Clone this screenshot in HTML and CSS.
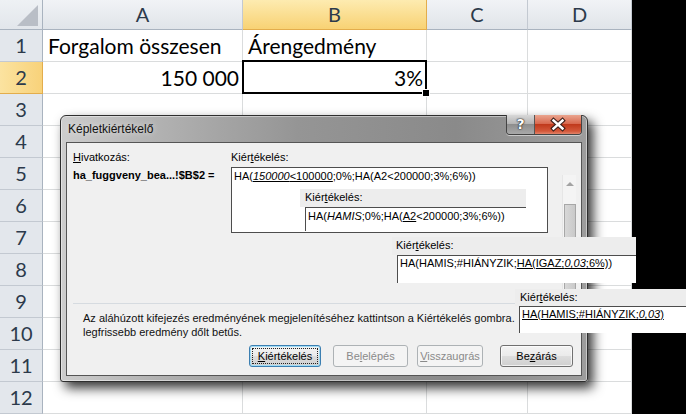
FILE: index.html
```html
<!DOCTYPE html>
<html lang="hu">
<head>
<meta charset="utf-8">
<title>Képletkiértékelő</title>
<link rel="stylesheet" href="styles.css">
</head>
<body>
<div class="sheet">
  <div class="corner"><svg width="42" height="29" viewBox="0 0 42 29"><polygon points="38,5 38,26 17,26" fill="#b9bec6"/></svg></div>
  <div class="ch">A</div><div class="ch hl">B</div><div class="ch">C</div><div class="ch">D</div>
  <div class="void"></div>

  <div class="rh">1</div><div class="c">Forgalom összesen</div><div class="c">Árengedmény</div><div class="c"></div><div class="c"></div>
  <div class="rh hl">2</div><div class="c num">150 000</div><div class="c num active">3%</div><div class="c"></div><div class="c"></div>
  <div class="rh">3</div><div class="c"></div><div class="c"></div><div class="c"></div><div class="c"></div>
  <div class="rh">4</div><div class="c"></div><div class="c"></div><div class="c"></div><div class="c"></div>
  <div class="rh">5</div><div class="c"></div><div class="c"></div><div class="c"></div><div class="c"></div>
  <div class="rh">6</div><div class="c"></div><div class="c"></div><div class="c"></div><div class="c"></div>
  <div class="rh">7</div><div class="c"></div><div class="c"></div><div class="c"></div><div class="c"></div>
  <div class="rh">8</div><div class="c"></div><div class="c"></div><div class="c"></div><div class="c"></div>
  <div class="rh">9</div><div class="c"></div><div class="c"></div><div class="c"></div><div class="c"></div>
  <div class="rh">10</div><div class="c"></div><div class="c"></div><div class="c"></div><div class="c"></div>
  <div class="rh">11</div><div class="c"></div><div class="c"></div><div class="c"></div><div class="c"></div>
  <div class="rh">12</div><div class="c"></div><div class="c"></div><div class="c"></div><div class="c"></div>
</div>

<div class="dialog">
  <div class="titlebar">
    <span class="title">Képletkiértékelő</span>
    <div class="capbtns">
      <div class="help">?</div>
      <div class="close"><svg width="46" height="19" viewBox="0 0 46 19"><path d="M18.5 5.5 L27.5 13.5 M27.5 5.5 L18.5 13.5" stroke="#3b1f1a" stroke-width="4.6" stroke-linecap="square" fill="none"/><path d="M18.5 5.5 L27.5 13.5 M27.5 5.5 L18.5 13.5" stroke="#ffffff" stroke-width="2.4" stroke-linecap="square" fill="none"/></svg></div>
    </div>
  </div>
  <div class="client">
    <div class="top">
      <div class="refcol">
        <div class="lbl"><u>H</u>ivatkozás:</div>
        <div class="ref">ha_fuggveny_bea...!$B$2 =</div>
      </div>
      <div class="evalcol">
        <div class="lbl">Kiér<u>t</u>ékelés:</div>
        <div class="evalbox">HA(<u><i>150000</i>&lt;100000</u>;0%;HA(A2&lt;200000;3%;6%))</div>
      </div>
      <div class="vscroll"><div class="uparrow"></div><div class="thumb"></div></div>
    </div>
    <div class="sep"></div>
    <p class="msg">Az aláhúzott kifejezés eredményének megjelenítéséhez kattintson a Kiértékelés gombra.&nbsp; A<br>legfrissebb eredmény dőlt betűs.</p>
    <div class="buttons">
      <div class="btn b1 focus"><span class="focusring"><u>K</u>iértékelés</span></div>
      <div class="btn b2 disabled">Be<u>l</u>elépés</div>
      <div class="btn b3 disabled"><u>V</u>isszaugrás</div>
      <div class="btn b4">Be<u>z</u>árás</div>
    </div>
  </div>
</div>

<div class="step s2">
  <div class="band">Kiér<u>t</u>ékelés:</div>
  <div class="sbox">HA(<i>HAMIS</i>;0%;HA(<u>A2</u>&lt;200000;3%;6%))</div>
</div>
<div class="step s3">
  <div class="band">Kiér<u>t</u>ékelés:</div>
  <div class="sbox">HA(HAMIS;#HIÁNYZIK;<u>HA(IGAZ;<i>0,03</i>;6%)</u>)</div>
</div>
<div class="step s4">
  <div class="band">Kiér<u>t</u>ékelés:</div>
  <div class="sbox"><u>HA(HAMIS;#HIÁNYZIK;<i>0,03</i>)</u></div>
</div>
</body>
</html>
```
FILE: styles.css
```css
* { box-sizing: border-box; }
html, body { margin: 0; padding: 0; }
body {
  width: 686px;
  height: 414px;
  overflow: hidden;
  position: relative;
  background: #ffffff;
}

/* ---------- spreadsheet ---------- */
.sheet {
  display: grid;
  grid-template-columns: 43px 200px 184px 101px 104px 54px;
  grid-template-rows: 30px repeat(12, 32px);
  font-family: Lato, "Liberation Sans", sans-serif;
}
.void {
  grid-column: 6;
  grid-row: 1 / span 13;
  background: #000;
}
.corner {
  background: linear-gradient(#eef1f4, #e2e6eb);
  border-right: 1px solid #a9b3bf;
  border-bottom: 1px solid #a9b3bf;
}
.corner svg { display: block; }
.ch {
  background: linear-gradient(#f1f3f6, #e0e4e9);
  border-right: 1px solid #c3c9d1;
  border-bottom: 1px solid #a9b3bf;
  text-align: center;
  font-size: 20px;
  line-height: 29px;
  color: #2c3a4b;
}
.rh {
  background: #e3e7ec;
  border-right: 1px solid #a9b3bf;
  border-bottom: 1px solid #c3c9d1;
  text-align: center;
  font-size: 20px;
  line-height: 31px;
  color: #2c3a4b;
}
.ch.hl {
  background: linear-gradient(#fdebb0, #f8d274);
  border-right-color: #e3ad4c;
  border-bottom-color: #e3ad4c;
}
.rh.hl {
  background: linear-gradient(to right, #fbe3a0, #f8d27a);
  border-right-color: #e3ad4c;
  border-bottom-color: #e3ad4c;
}
.c {
  border-right: 1px solid #dadcdd;
  border-bottom: 1px solid #dadcdd;
  font-size: 21px;
  line-height: 31px;
  padding: 0 3px 0 5px;
  white-space: nowrap;
  color: #000;
}
.num { text-align: right; }
.active { position: relative; }
.active::after {
  content: "";
  position: absolute;
  left: -1px; top: -2px; right: -1px; bottom: -1px;
  border: 2px solid #000;
}
.active::before {
  content: "";
  position: absolute;
  right: -4px; bottom: -4px;
  width: 6px; height: 6px;
  background: #000;
  border: 1px solid #fff;
  z-index: 2;
}

/* ---------- dialog ---------- */
.dialog {
  position: absolute;
  left: 60px;
  top: 115px;
  width: 528px;
  height: 267px;
  display: flex;
  flex-direction: column;
  border: 1px solid #2e2e2e;
  border-radius: 6px 6px 3px 3px;
  background: linear-gradient(to right, #cdcdcd 0%, #b2b2b2 18%, #959595 45%, #8a8a8a 75%, #9d9d9d 100%);
  box-shadow: 5px 6px 12px rgba(0,0,0,0.8), inset 0 0 0 1px rgba(255,255,255,0.45);
  font-family: "Liberation Sans", Arial, sans-serif;
  font-size: 11px;
  color: #000;
}
.titlebar {
  height: 26px;
  display: flex;
  justify-content: space-between;
  align-items: flex-start;
  padding-left: 7px;
  padding-right: 5px;
}
.title {
  font-size: 12px;
  line-height: 26px;
  color: #111;
  text-shadow: 0 0 6px rgba(255,255,255,0.7);
}
.capbtns {
  display: flex;
  margin-top: -1px;
  border: 1px solid #444;
  border-top: none;
  border-radius: 0 0 4px 4px;
  overflow: hidden;
  box-shadow: 0 1px 0 rgba(255,255,255,0.5);
}
.help {
  width: 28px;
  height: 19px;
  background: linear-gradient(#d8d8d8, #b5b5b5 45%, #8e8e8e 50%, #a9a9a9);
  border-right: 1px solid #555;
  text-align: center;
  font: bold 14px/19px "DejaVu Sans", sans-serif;
  color: #fff;
  text-shadow: 0 0 1px #222, 0 0 1px #222, 0 0 2px #333;
}
.close {
  width: 46px;
  height: 19px;
  background: linear-gradient(#eaa58f, #d86a50 45%, #c03a1c 50%, #d3583a 85%, #e2846a);
}
.close svg { display: block; }

.client {
  flex: 1;
  margin: 0 5px 5px 5px;
  background: #f0f0f0;
  border: 1px solid #555;
  padding: 8px 0 0 6px;
  display: flex;
  flex-direction: column;
}
.top {
  display: flex;
  height: 152px;
}
.refcol { width: 158px; }
.lbl { line-height: 13px; white-space: nowrap; }
.ref {
  margin-top: 5px;
  font-weight: bold;
  font-size: 11px;
  line-height: 13px;
  white-space: nowrap;
}
.evalcol { width: 317px; }
.evalcol .lbl { margin-bottom: 3px; }
.evalbox {
  height: 66px;
  background: #fff;
  border: 1px solid #4d4d4d;
  padding: 1px 2px;
  line-height: 14px;
  white-space: nowrap;
  overflow: hidden;
}
.vscroll {
  margin-left: 14px;
  margin-top: 24px;
  width: 14px;
  height: 128px;
  background: #f4f4f4;
  border-left: 1px solid #e6e6e6;
  display: flex;
  flex-direction: column;
  align-items: center;
}
.uparrow {
  margin-top: 7px;
  width: 0; height: 0;
  border-left: 4px solid transparent;
  border-right: 4px solid transparent;
  border-bottom: 4px solid #a3a3a3;
}
.thumb {
  margin-top: 18px;
  width: 12px;
  flex: 1;
  background: linear-gradient(to right, #d8d8d8, #c9c9c9);
  border: 1px solid #a7a7a7;
  border-bottom: none;
}
.sep {
  height: 1px;
  margin-right: 8px;
  background: #d6dbe0;
}
.msg {
  margin: 7px 0 0 10px;
  line-height: 14px;
  white-space: nowrap;
  color: #101010;
}
.buttons {
  display: flex;
  margin-top: 6px;
  padding-left: 176px;
}
.btn {
  height: 22px;
  border: 1px solid #707070;
  border-radius: 3px;
  background: linear-gradient(#f3f3f3 0%, #ebebeb 48%, #dddddd 52%, #cfcfcf 100%);
  box-shadow: inset 0 0 0 1px rgba(255,255,255,0.7);
  text-align: center;
  line-height: 20px;
  white-space: nowrap;
}
.b1 { width: 72px; }
.b2 { width: 75px; margin-left: 12px; }
.b3 { width: 66px; margin-left: 9px; }
.b4 { width: 73px; margin-left: 17px; }
.btn.focus {
  border-color: #3c7fb1;
  box-shadow: inset 0 0 0 1px #9fdcf6;
  padding: 2px;
}
.focusring {
  display: block;
  height: 16px;
  line-height: 15px;
  border: 1px dotted #222;
}
.btn.disabled {
  border-color: #adb2b5;
  background: #f4f4f4;
  color: #8a8a8a;
  box-shadow: none;
}

/* ---------- evaluation step overlays ---------- */
.step {
  position: absolute;
  font-family: "Liberation Sans", Arial, sans-serif;
  font-size: 11px;
  color: #000;
}
.band {
  background: #ededed;
  white-space: nowrap;
}
.sbox {
  background: #fff;
  border-left: 1px solid #4d4d4d;
  border-top: 1px solid #4d4d4d;
  padding-left: 2px;
  line-height: 14px;
  white-space: nowrap;
  overflow: hidden;
}
.s2 { left: 300px; top: 189px; width: 226px; }
.s2 .band { height: 18px; line-height: 17px; padding-left: 5px; }
.s2 .sbox { margin-left: 5px; height: 24px; padding-top: 1px; }

.s3 { left: 392px; top: 237px; width: 244px; }
.s3 .band { height: 18px; line-height: 17px; padding-left: 4px; }
.s3 .sbox { margin-left: 5px; height: 28px; }

.s4 { left: 515px; top: 289px; width: 171px; }
.s4 .band { height: 17px; line-height: 16px; padding-left: 5px; }
.s4 .sbox { margin-left: 4px; height: 27px; }
```
